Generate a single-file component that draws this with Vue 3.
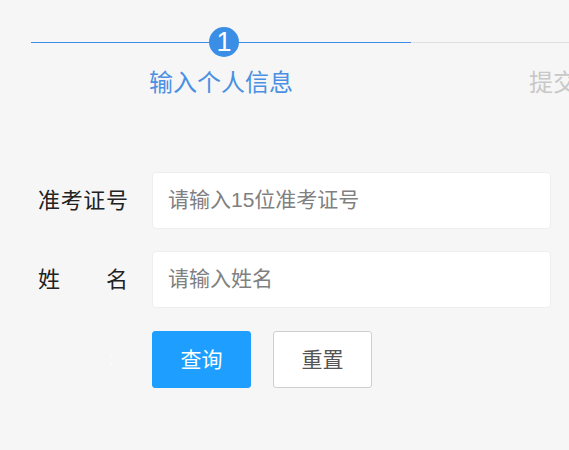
<template>
  <div class="page">
    <div class="steps">
      <div v-for="(step, index) in steps" :key="step" :class="['step', { active: index === 0 }]">
        <div class="track">
          <span v-if="index === 0" class="dot">1</span>
        </div>
        <div class="step-title">{{ step }}</div>
      </div>
    </div>

    <form class="form" @submit.prevent>
      <div class="row">
        <label class="label">准考证号</label>
        <input class="field" type="text" placeholder="请输入15位准考证号" />
      </div>
      <div class="row">
        <label class="label">姓名</label>
        <input class="field" type="text" placeholder="请输入姓名" />
      </div>
      <div class="actions">
        <span class="spacer">:</span>
        <button class="btn primary" type="submit">查询</button>
        <button class="btn" type="reset">重置</button>
      </div>
    </form>
  </div>
</template>

<script setup>
const steps = ['输入个人信息', '提交查询信息']
</script>

<style>
html,
body {
  margin: 0;
  background: #f6f6f6;
}
</style>

<style scoped>
.page {
  width: 569px;
  height: 450px;
  overflow: hidden;
  background: #f6f6f6;
  box-sizing: border-box;
  padding: 27px 18px 0 31px;
  font-family: "Liberation Sans", "Noto Sans CJK SC", sans-serif;
}

.steps {
  display: flex;
  width: 760px;
}

.step {
  width: 380px;
  flex: none;
}

.track {
  height: 30px;
  display: flex;
  justify-content: center;
  align-items: center;
  background: linear-gradient(#e0e0e0, #e0e0e0) 0 15px / 100% 1px no-repeat;
}

.step.active .track {
  background-image: linear-gradient(#3a8ee6, #3a8ee6);
}

.dot {
  width: 30px;
  height: 30px;
  margin-left: 6px;
  border-radius: 50%;
  background: #3a8ee6;
  color: #fff;
  font-size: 27px;
  line-height: 30px;
  text-align: center;
}

.step-title {
  margin-top: 11px;
  font-size: 24px;
  line-height: 29px;
  text-align: center;
  color: #c8c8c8;
}

.step.active .step-title {
  color: #4a90e2;
}

.form {
  margin-top: 75px;
  margin-left: 7px;
}

.row {
  display: flex;
  align-items: center;
  gap: 24px;
  margin-bottom: 22px;
}

.label {
  width: 90px;
  flex: none;
  padding-bottom: 5px;
  font-size: 22px;
  color: #222;
  text-align-last: justify;
}

.field {
  width: 399px;
  height: 57px;
  box-sizing: border-box;
  padding: 0 16px 2px 15px;
  border: 1px solid #eeeeee;
  border-radius: 4px;
  background: #fff;
  font-family: inherit;
  font-size: 21px;
  outline: none;
}

.field::placeholder {
  color: #808080;
  opacity: 1;
}

.actions {
  display: flex;
  align-items: center;
  gap: 22px;
  margin-top: 23px;
}

/* the label cell of this row only holds a colon, almost the page colour */
.spacer {
  width: 92px;
  flex: none;
  font-size: 16px;
  text-align: right;
  padding-right: 16px;
  box-sizing: border-box;
  color: #fdfdfd;
}

.btn {
  width: 99px;
  height: 57px;
  padding: 0 0 3px;
  border: 1px solid #cfcfcf;
  border-radius: 3px;
  background: #fff;
  color: #555;
  font-family: inherit;
  font-size: 21px;
}

.btn.primary {
  border-color: #1e9fff;
  background: #1e9fff;
  color: #fff;
}
</style>
